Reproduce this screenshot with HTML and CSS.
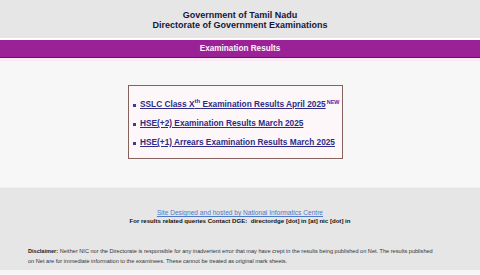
FILE: index.html
```html
<!DOCTYPE html>
<html>
<head>
<meta charset="utf-8">
<title>Examination Results</title>
<link rel="stylesheet" href="styles.css">
</head>
<body>
<div class="header">
  <div class="title">Government of Tamil Nadu</div>
  <div class="title">Directorate of Government Examinations</div>
</div>
<div class="bar">Examination Results</div>
<div class="main">
  <div class="box">
    <ul class="links">
      <li><a href="#">SSLC Class X<sup>th</sup> Examination Results April 2025</a><span class="new">NEW</span></li>
      <li><a href="#">HSE(+2) Examination Results March 2025</a></li>
      <li><a href="#">HSE(+1) Arrears Examination Results March 2025</a></li>
    </ul>
  </div>
</div>
<div class="footer">
  <div class="credits">
    <a class="nic" href="#">Site Designed and hosted by National Informatics Centre</a>
    <div class="contact">For results related queries Contact DGE:&nbsp; directordge [dot] in [at] nic [dot] in</div>
  </div>
  <p class="disclaimer"><b>Disclaimer:</b> Neither NIC nor the Directorate is responsible for any inadvertent error that may have crept in the results being published on Net. The results published on Net are for immediate information to the examinees. These cannot be treated as original mark sheets.</p>
</div>
<div class="bottom"></div>
</body>
</html>
```
FILE: styles.css
```css
html, body {
  margin: 0;
  padding: 0;
  background: #f4f4f4;
  font-family: "Liberation Sans", Arial, sans-serif;
}
.header {
  height: 40px;
  box-sizing: border-box;
  padding-top: 10px;
  background: #e6e6e6;
  border-bottom: 2px solid #ffffff;
  text-align: center;
}
.title {
  font-size: 9px;
  line-height: 10px;
  font-weight: bold;
  color: #15163f;
}
.bar {
  height: 17px;
  line-height: 17px;
  background: #9b2196;
  border-bottom: 1px solid #5a1a5c;
  color: #fff4fb;
  font-size: 8.2px;
  font-weight: bold;
  text-align: center;
}
.main {
  height: 129px;
  box-sizing: border-box;
  background: #f7f7f7;
  border-top: 3px solid #fdeaf6;
  display: flex;
  justify-content: center;
  padding-top: 24px;
  padding-right: 9px;
}
.box {
  width: 215px;
  height: 74px;
  box-sizing: border-box;
  border: 1px solid #86625f;
  background: #fdf7f9;
  padding: 9px 0 0 4px;
}
.links {
  list-style: none;
  margin: 0;
  padding: 0;
}
.links li {
  height: 19px;
  line-height: 19px;
  font-size: 8.3px;
  font-weight: bold;
  white-space: nowrap;
  display: flex;
  align-items: center;
}
.links li::before {
  content: "";
  width: 3px;
  height: 3px;
  background: #3b3b9a;
  margin-right: 4px;
  margin-top: 1px;
}
.links a {
  color: #2e2c86;
  text-decoration: underline;
}
.links sup {
  font-size: 6px;
  line-height: 0;
  vertical-align: 4px;
}
.new {
  font-size: 5.5px;
  line-height: 6px;
  color: #6a1a9a;
  font-weight: bold;
  margin-left: 1px;
  align-self: flex-start;
  margin-top: 4px;
}
.footer {
  height: 83px;
  box-sizing: border-box;
  background: #e6e6e6;
  border-top: 1px solid #efefef;
  padding-top: 21px;
}
.credits {
  text-align: center;
  font-size: 6.6px;
  line-height: 8px;
}
.nic {
  color: #4f78c9;
  text-decoration: underline;
}
.contact {
  font-size: 6.1px;
  font-weight: bold;
  color: #111111;
}
.disclaimer {
  margin: 21px 0 0 28px;
  width: 408px;
  font-size: 5.6px;
  line-height: 10px;
  color: #333333;
}
.disclaimer b {
  color: #222222;
}
.bottom {
  height: 5px;
  background: #f6f6f6;
}
```
